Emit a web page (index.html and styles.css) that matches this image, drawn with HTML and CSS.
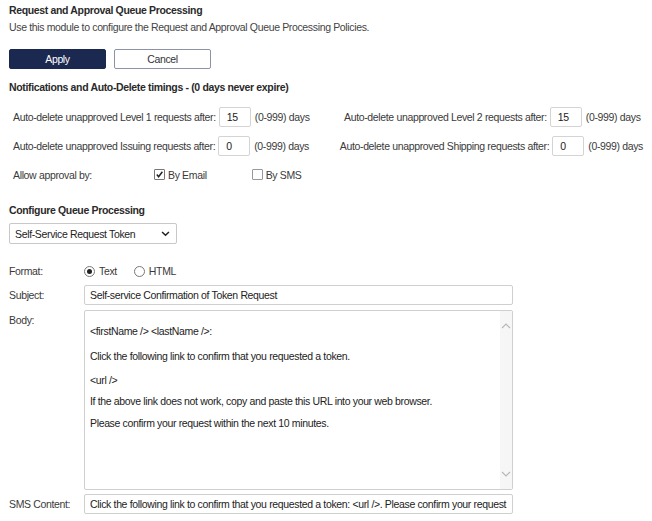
FILE: index.html
```html
<!DOCTYPE html>
<html>
<head>
<meta charset="utf-8">
<link rel="stylesheet" href="styles.css">
</head>
<body>
<div class="page">
  <h1 class="title">Request and Approval Queue Processing</h1>
  <p class="intro">Use this module to configure the Request and Approval Queue Processing Policies.</p>
  <div class="actions">
    <button class="btn btn-primary">Apply</button>
    <button class="btn btn-secondary">Cancel</button>
  </div>
  <h2 class="section">Notifications and Auto-Delete timings - (0 days never expire)</h2>
  <div class="timings">
    <div class="trow">
      <div class="tcell">
        <span class="tlabel">Auto-delete unapproved Level 1 requests after:</span>
        <span class="num">15</span>
        <span class="hint">(0-999) days</span>
      </div>
      <div class="tcell right">
        <span class="tlabel">Auto-delete unapproved Level 2 requests after:</span>
        <span class="num">15</span>
        <span class="hint">(0-999) days</span>
      </div>
    </div>
    <div class="trow">
      <div class="tcell">
        <span class="tlabel">Auto-delete unapproved Issuing requests after:</span>
        <span class="num">0</span>
        <span class="hint">(0-999) days</span>
      </div>
      <div class="tcell right">
        <span class="tlabel">Auto-delete unapproved Shipping requests after:</span>
        <span class="num">0</span>
        <span class="hint">(0-999) days</span>
      </div>
    </div>
    <div class="trow approval">
      <span class="alabel">Allow approval by:</span>
      <span class="check checked">
        <span class="box"><svg viewBox="0 0 11 11" width="11" height="11"><path d="M2.2 5.6 L4.4 8.2 L9 2.2" fill="none" stroke="#222" stroke-width="1.8"/></svg></span>
        By Email
      </span>
      <span class="check sms">
        <span class="box"></span>
        By SMS
      </span>
    </div>
  </div>
  <h2 class="section configure">Configure Queue Processing</h2>
  <div class="select">
    <span>Self-Service Request Token</span>
    <svg viewBox="0 0 10 7" width="9" height="6"><path d="M1 1.2 L5 5 L9 1.2" fill="none" stroke="#222" stroke-width="1.8"/></svg>
  </div>
  <div class="form">
    <div class="frow format">
      <span class="flabel">Format:</span>
      <span class="radio on"><span class="dot"></span>Text</span>
      <span class="radio"><span class="dot"></span>HTML</span>
    </div>
    <div class="frow">
      <span class="flabel">Subject:</span>
      <div class="field">Self-service Confirmation of Token Request</div>
    </div>
    <div class="frow bodyrow">
      <span class="flabel">Body:</span>
      <div class="area">
        <div class="content">
          <p>&lt;firstName /&gt; &lt;lastName /&gt;:</p>
          <p>Click the following link to confirm that you requested a token.</p>
          <p>&lt;url /&gt;</p>
          <p>If the above link does not work, copy and paste this URL into your web browser.</p>
          <p>Please confirm your request within the next 10 minutes.</p>
        </div>
        <div class="scrollbar">
          <svg viewBox="0 0 10 6" width="10" height="6"><path d="M1 5 L5 1 L9 5" fill="none" stroke="#b8b8b8" stroke-width="1.2"/></svg>
          <svg viewBox="0 0 10 6" width="10" height="6"><path d="M1 1 L5 5 L9 1" fill="none" stroke="#b8b8b8" stroke-width="1.2"/></svg>
        </div>
      </div>
    </div>
    <div class="frow">
      <span class="flabel">SMS Content:</span>
      <div class="field">Click the following link to confirm that you requested a token: &lt;url /&gt;. Please confirm your request</div>
    </div>
  </div>
</div>
</body>
</html>
```
FILE: styles.css
```css
* { box-sizing: border-box; }
html, body { margin: 0; padding: 0; background: #fff; }
body {
  font-family: "Liberation Sans", Arial, sans-serif;
  font-size: 10.5px;
  letter-spacing: -0.35px;
  color: #3a3a3a;
}
.page { padding: 3px 9px 0 9px; width: 652px; }
.title {
  font-size: 10.5px; font-weight: bold; color: #2a2a2a;
  margin: 0; line-height: 14px;
}
.intro { margin: 3px 0 0 0; line-height: 14px; color: #444; }
.actions { display: flex; gap: 8px; margin-top: 15px; }
.btn {
  width: 97px; height: 20px; border-radius: 2px;
  font-family: inherit; font-size: 10.5px; letter-spacing: -0.35px; padding: 0;
}
.btn-primary { background: #1b2850; color: #fff; border: 1px solid #1b2850; }
.btn-secondary { background: #fff; color: #333; border: 1px solid #8c93a8; }
.section {
  font-size: 10.5px; font-weight: bold; color: #2a2a2a;
  margin: 11px 0 0 0; line-height: 14px;
}
.timings { margin-top: 8px; padding-left: 4px; }
.trow { display: flex; height: 29px; align-items: center; }
.tcell { display: flex; align-items: center; width: 331px; white-space: nowrap; }
.tcell.right { width: auto; }
.tlabel { white-space: nowrap; }
.num {
  width: 32px; height: 20px; border: 1px solid #d4d4d4; border-radius: 2px;
  margin-left: 3px; padding-left: 7px; line-height: 18px; color: #222; flex: none;
}
.hint { margin-left: 4px; white-space: nowrap; }
.approval .alabel { width: 141px; }
.check { display: flex; align-items: center; gap: 3px; }
.check.sms { margin-left: 45px; }
.box {
  width: 11px; height: 11px; border: 1px solid #999; border-radius: 1px;
  display: flex; align-items: center; justify-content: center; background: #fff;
}
.checked .box { border-color: #777; }
.configure { margin-top: 14px; }
.select {
  margin-top: 6px; width: 168px; height: 21px;
  border: 1px solid #c8c8c8; border-radius: 2px;
  display: flex; align-items: center; justify-content: space-between;
  padding: 0 6px 0 5px; color: #222;
}
.form { margin-top: 17px; padding-left: 0; }
.frow { display: flex; align-items: center; margin-bottom: 5px; }
.flabel { width: 75px; flex: none; }
.format { height: 20px; margin-bottom: 4px; }
.radio { display: flex; align-items: center; gap: 4px; margin-right: 17px; }
.dot {
  width: 11px; height: 11px; border: 1px solid #777; border-radius: 50%;
  display: inline-block; position: relative; background: #fff;
}
.radio.on .dot::after {
  content: ""; position: absolute; left: 2px; top: 2px;
  width: 5px; height: 5px; border-radius: 50%; background: #222;
}
.field {
  width: 429px; height: 20px; border: 1px solid #cfcfcf; border-radius: 2px;
  padding: 0 5px; line-height: 18px; color: #222; white-space: nowrap; overflow: hidden;
}
.bodyrow { align-items: flex-start; margin-bottom: 4px; }
.bodyrow .flabel { padding-top: 4px; }
.area {
  width: 429px; height: 180px; border: 1px solid #cfcfcf; border-radius: 2px;
  display: flex;
}
.content { flex: 1; padding: 13px 5px 0 5px; color: #222; }
.content p { margin: 0 0 8px 0; line-height: 14px; }
.content p:first-child { margin-bottom: 11px; }
.content p:nth-child(2) { margin-bottom: 10px; }
.content p:nth-child(3) { margin-bottom: 7px; }
.scrollbar {
  width: 12px; background: #f6f6f6; display: flex; flex-direction: column;
  justify-content: space-between; align-items: center; padding: 12px 0 12px 0;
}
```
